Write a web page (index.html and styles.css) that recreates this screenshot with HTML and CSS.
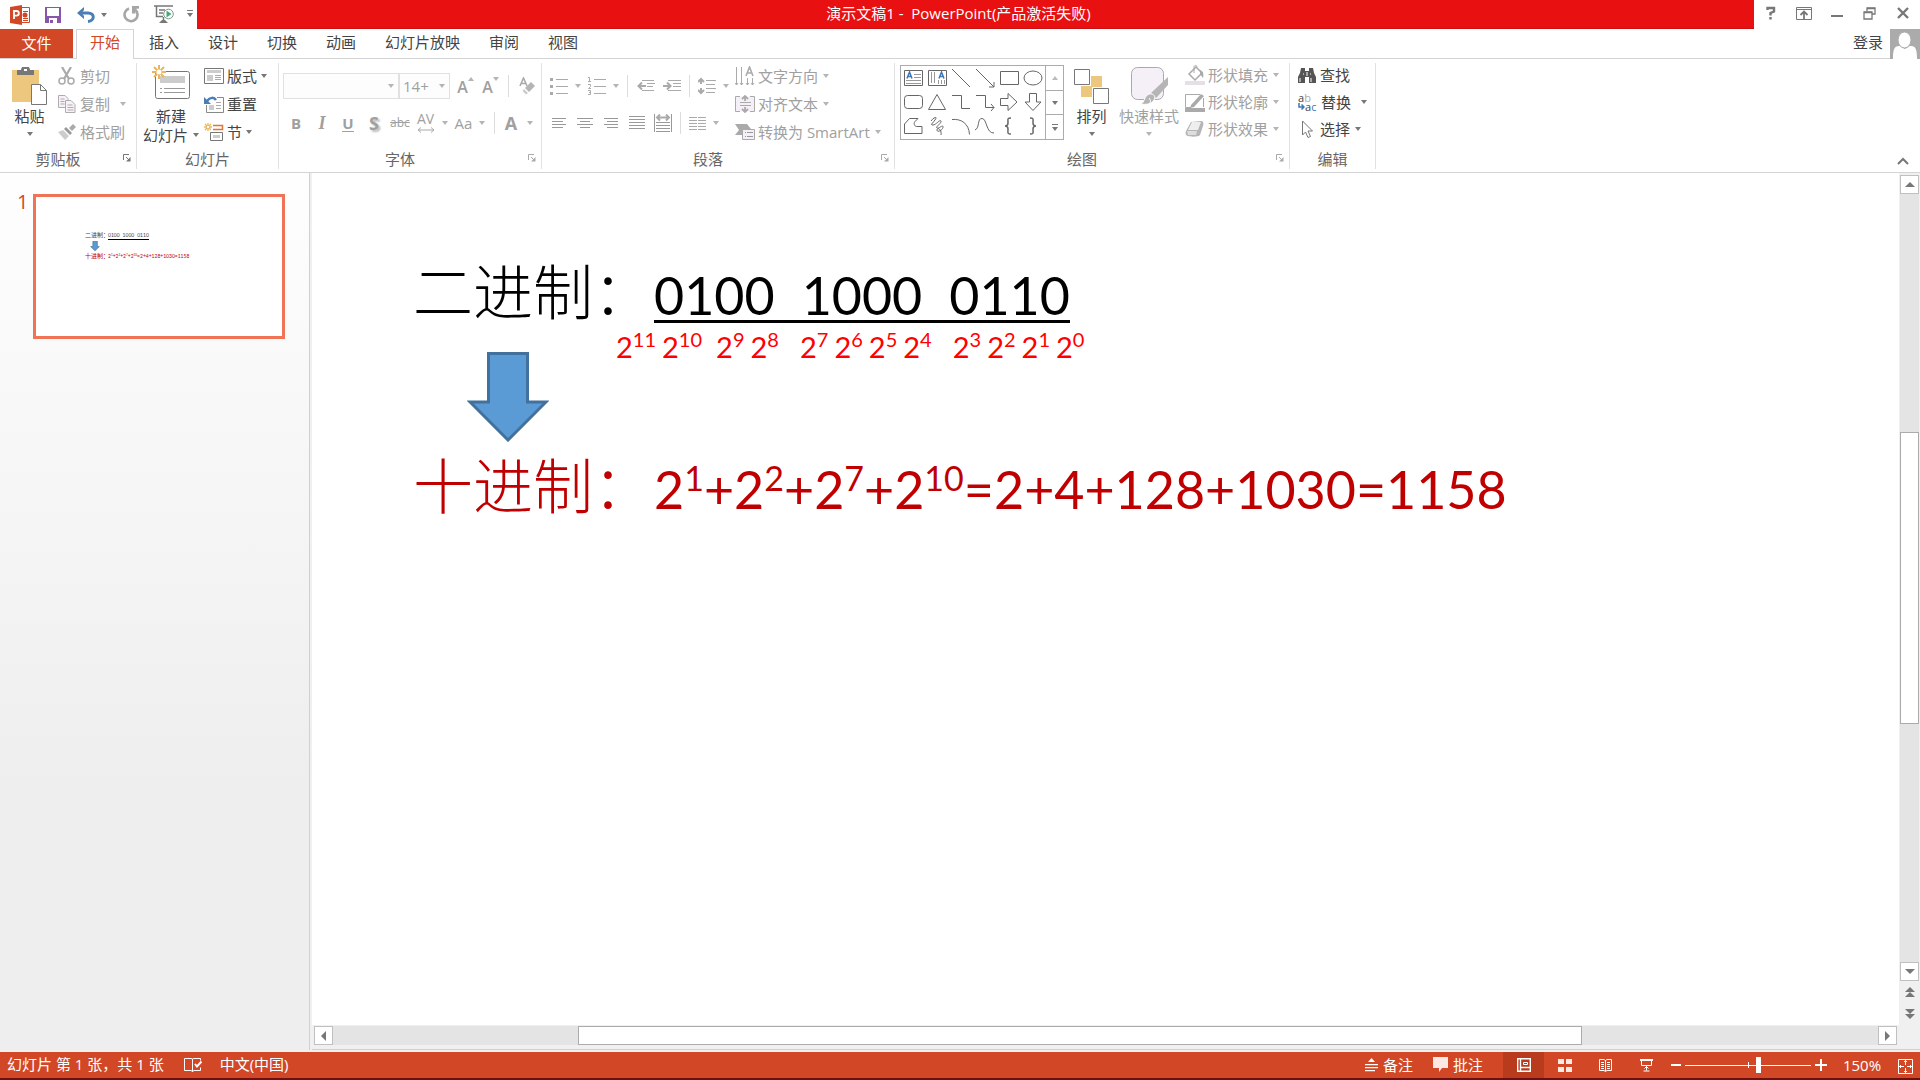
FILE: index.html
```html
<!DOCTYPE html>
<html lang="zh-CN">
  <head>
    <meta charset="UTF-8" />
    <meta name="viewport" content="width=device-width, initial-scale=1.0" />
    <title>演示文稿1 - PowerPoint</title>
    <link rel="stylesheet" href="styles.css">
  </head>
  <body>
    <!-- title bar -->
    <header class="titlebar">
      <div class="quick">
        <svg class="logo" width="20" height="20" viewBox="0 0 20 20"><path d="M11 2.500h8.500v15H11" fill="#fff" stroke="#d24726"/><path d="M13 6.500h5M13 13.500h5M13 15.500h5" stroke="#d24726"/><circle cx="15" cy="10" r="2.500" fill="#d24726"/><path d="M0 2 12 0v20L0 18z" fill="#d24726"/><path d="M4 14V6h2.500a2.300 2.300 0 0 1 0 4.700H4" fill="none" stroke="#fff" stroke-width="1.800"/></svg>
        <button class="save" aria-label="保存"><svg width="16" height="16" viewBox="0 0 16 16"><path d="M0 0h16v16H0z" fill="#8a56ac"/><path d="M2 1h12v8H2zM4 11h8v5H4z" fill="#fff"/><path d="M5 13h3v3H5z" fill="#8a56ac"/></svg></button>
        <button class="undo" aria-label="撤消"><svg width="18" height="16" viewBox="0 0 18 16"><path d="M2 6h9c7 0 7 8 0 8.500" fill="none" stroke="#4a7eb5" stroke-width="3"/><path d="M7 0v3L4.500 6 7 9v3L0 6z" fill="#4a7eb5"/></svg><i class="caret"></i></button>
        <button class="redo" aria-label="恢复"><svg width="17" height="17" viewBox="0 0 17 17"><path d="M6 2.500A6.500 6.500 0 1 0 12 3.500" fill="none" stroke="#a6a6a6" stroke-width="2.600"/><path d="M9 0h7v2.500l-3.500.5v4.500H9z" fill="#a6a6a6"/></svg></button>
        <button class="show" aria-label="从头开始"><svg width="20" height="19" viewBox="0 0 20 19"><path d="M0 1h19M2.500 1v10.500H9M5 5h6M5 8h4M9.500 12v3" fill="none" stroke="#777" stroke-width="1.500"/><path d="m5 18 3-3h3l3 3z" fill="#777"/><circle cx="14.500" cy="9" r="4.800" fill="#fff" stroke="#7a9c8a"/><path d="m12.500 5.500 5 3.500-5 3.500z" fill="#4ba779"/></svg></button>
        <button class="custom" aria-label="自定义快速访问工具栏"><i class="caret lined"></i></button>
      </div>
      <h1 class="caption">演示文稿1 -&nbsp; PowerPoint(产品激活失败)</h1>
      <div class="winbtns">
        <button aria-label="帮助"><svg width="10" height="14" viewBox="0 0 10 14"><path d="M1.500 4V2h6.500v3.500L4.500 7v2.500M4.500 11v2.500" fill="none" stroke="#777" stroke-width="2.400"/></svg></button>
        <button aria-label="功能区显示选项"><svg width="16" height="13" viewBox="0 0 16 13" fill="none" stroke="#777"><path d="M.5.5h15v12H.5zM0 2.500h16"/><path d="M8 12V5M4.500 8 8 4.500 11.500 8" stroke-width="1.800"/></svg></button>
        <button aria-label="最小化"><svg width="12" height="12" viewBox="0 0 12 12"><path d="M0 8h12v2H0z" fill="#777"/></svg></button>
        <button aria-label="还原"><svg width="13" height="13" viewBox="0 0 13 13" fill="none" stroke="#777" stroke-width="1.300"><path d="M4 4V1h8v6H9M1 5h8v7H1z"/><path d="M4 1.500h8M1 5.500h8"/></svg></button>
        <button aria-label="关闭"><svg width="12" height="12" viewBox="0 0 12 12"><path d="m1 1 10 10M11 1 1 11" stroke="#777" stroke-width="2.400"/></svg></button>
      </div>
    </header>

    <!-- ribbon tabs -->
    <nav class="tabs">
      <button class="tab file">文件</button>
      <button class="tab active">开始</button>
      <button class="tab">插入</button>
      <button class="tab">设计</button>
      <button class="tab">切换</button>
      <button class="tab">动画</button>
      <button class="tab">幻灯片放映</button>
      <button class="tab">审阅</button>
      <button class="tab">视图</button>
      <button class="login">登录</button>
      <svg class="avatar" width="30" height="30" viewBox="0 0 30 30"><path d="M0 0h30v30H0z" fill="#ababab"/><path d="M3 30c0-9 1-13 6-13h1l5 3 5-3h1c5 0 6 4 6 13z" fill="#fff"/><ellipse cx="14.500" cy="11" rx="6.500" ry="8" fill="#fff" stroke="#ababab"/></svg>
    </nav>

    <!-- ribbon -->
    <section class="ribbon">
      <div class="group clipboard">
        <div class="tools">
          <button class="big"><svg width="35" height="38" viewBox="0 0 35 38"><path d="M0 3h27v32H0z" fill="#eec77e"/><path d="M5 3h4a4 4 0 0 1 9 0h4v5H5z" fill="#777"/><path d="M12 2h3v2h-3z" fill="#fff"/><path d="M19.500 17.500h9l6 6v14h-15z" fill="#fff" stroke="#777"/><path d="M28.500 17.500v6h6" fill="none" stroke="#777"/></svg><span>粘贴</span><i class="caret"></i></button>
          <div class="stack off">
            <button class="row"><svg width="18" height="18" viewBox="0 0 18 18" fill="none" stroke="#aaa"><circle cx="4" cy="14" r="3" stroke-width="1.500"/><circle cx="13" cy="14" r="3" stroke-width="1.500"/><path d="M4 0 11 12M13 0 6 12" stroke-width="2.200"/></svg>剪切</button>
            <button class="row"><svg width="18" height="18" viewBox="0 0 18 18" fill="#f7f2f7" stroke="#b0abb0"><path d="M.5.5H7l3 3v9H.500z"/><path d="M2.500 4h4M2.500 6.500h4M2.500 9h4"/><path d="M7.500 5.500H13l4 4v8H7.500z"/><path d="M9.500 10h5M9.500 12.500h6M9.500 15h6"/></svg>复制<i class="caret far"></i></button>
            <button class="row"><svg width="18" height="16" viewBox="0 0 18 16"><path d="m11 4 4-4 3 3-4 4z" fill="#aaa"/><path d="m8 3 6 6-2 2-6-6z" fill="#999"/><path d="m5 6 6 6-4 4-7-8z" fill="#ccc"/></svg>格式刷</button>
          </div>
        </div>
        <div class="label">剪贴板<svg class="launch" width="8" height="8" viewBox="0 0 8 8"><path d="M.5 6V.5H6M3 3l3 3" fill="none" stroke="#777"/><path d="M7.500 3v4.500H3z" fill="#777"/></svg></div>
      </div>

      <div class="group slides">
        <div class="tools">
          <button class="big"><svg width="38" height="35" viewBox="0 0 38 35"><rect x="3.500" y="6.500" width="34" height="27" rx="2" fill="#fff" stroke="#777"/><path d="M8 11h25v7H8z" fill="#ccc"/><path d="M8 23.500h2M12 23.500h21M8 27.500h2M12 27.500h21" stroke="#999"/><path d="M7 0v14M0 7h14M2 2l10 10M12 2 2 12" stroke="#eab65c" stroke-width="2"/><circle cx="7" cy="7" r="2.500" fill="#fff"/></svg><span>新建</span><span>幻灯片<i class="caret"></i></span></button>
          <div class="stack">
            <button class="row"><svg width="20" height="16" viewBox="0 0 20 16"><path d="M.5.5h19v15H.5z" fill="#fff" stroke="#777"/><path d="M3 2h14v3H3zM3 7h6v6H3z" fill="#ccc"/><path d="M11 7.500h6M11 9.500h6M11 11.500h6" stroke="#aaa"/></svg>版式<i class="caret"></i></button>
            <button class="row"><svg width="20" height="17" viewBox="0 0 20 17"><path d="M13 1.500h6.500v15h-17V9" fill="#fff" stroke="#888"/><path d="M5 9h5v5H5z" fill="#ccc"/><path d="M12 6.500h5M12 9.500h5M12 12.500h5" stroke="#aaa"/><path d="M3 5c3-4 7-4 9-1" fill="none" stroke="#4a7eb5" stroke-width="2.500"/><path d="M0 1v7h7z" fill="#4a7eb5"/></svg>重置</button>
            <button class="row"><svg width="20" height="18" viewBox="0 0 20 18"><path d="M9 2.500h9.500v4H9" fill="none" stroke="#df7637" stroke-width="1.500"/><path d="M6.500 9.500h12v8h-12z" fill="#fff" stroke="#777"/><path d="M9 12h7v3H9z" fill="#ccc"/><path d="M4 0v8M0 4h8M1 1l6 6M7 1 1 7" stroke="#eab65c" stroke-width="1.300"/><circle cx="4" cy="4" r="1.200" fill="#fff"/></svg>节<i class="caret"></i></button>
          </div>
        </div>
        <div class="label">幻灯片</div>
      </div>

      <div class="group font off">
        <div class="lines">
          <div class="line">
            <label class="combo family"><select aria-label="字体"><option></option></select><i class="caret"></i></label>
            <label class="combo size"><select aria-label="字号"><option>14+</option></select><i class="caret"></i></label>
            <button class="tool grow" aria-label="增大字号">A<i class="caret up"></i></button>
            <button class="tool grow" aria-label="减小字号">A<i class="caret"></i></button>
            <span class="sep"></span>
            <button class="tool" aria-label="清除格式"><svg width="17" height="18" viewBox="0 0 17 18"><path d="M1 9 4.500 1 8 9M2 6.500h5" fill="none" stroke="#aaa" stroke-width="1.600"/><path d="m12 5 4 4-6 6-4-4z" fill="#b5b5b5"/><path d="m5 12 4 4-2 1.500L3.500 14z" fill="#ccc"/></svg></button>
          </div>
          <div class="line">
            <button class="tool"><b>B</b></button>
            <button class="tool italic"><b>I</b></button>
            <button class="tool under"><b>U</b></button>
            <button class="tool shadow"><b>S</b></button>
            <button class="tool strike">abc</button>
            <button class="tool wide spacing"><span>AV<svg width="18" height="6" viewBox="0 0 18 6"><path d="M1 3h16M4 .5 1 3l3 2.500M14 .5 17 3l-3 2.500" fill="none" stroke="#aaa"/></svg></span><i class="caret"></i></button>
            <button class="tool wide">Aa<i class="caret"></i></button>
            <span class="sep"></span>
            <button class="tool wide color"><b>A</b><i class="caret"></i></button>
          </div>
        </div>
        <div class="label">字体<svg class="launch" width="8" height="8" viewBox="0 0 8 8"><path d="M.5 6V.5H6M3 3l3 3" fill="none" stroke="#aaa"/><path d="M7.500 3v4.500H3z" fill="#aaa"/></svg></div>
      </div>

      <div class="group para off">
        <div class="tools">
          <div class="lines">
            <div class="line">
              <button class="tool wide" aria-label="项目符号"><svg width="18" height="18" viewBox="0 0 18 18"><path d="M6 2.500h12M6 9.500h12M6 16.500h12" stroke="#aaa"/><path d="M0 1h3v3H0zM0 8h3v3H0zM0 15h3v3H0z" fill="#aaa"/></svg><i class="caret"></i></button>
              <button class="tool wide" aria-label="编号"><svg width="18" height="18" viewBox="0 0 18 18" fill="none" stroke="#aaa"><path d="M6 2.500h12M6 9.500h12M6 16.500h12M0 .5h1.500v4M0 4.500h3M0 7.500h2.500v2L.5 11.500H3M0 13.500h2.500v4H0M1 15.500h1.500"/></svg><i class="caret"></i></button>
              <span class="sep"></span>
              <button class="tool" aria-label="减少缩进"><svg width="18" height="12" viewBox="0 0 18 12"><path d="M5 .5h12M10 3.500h8M10 6.500h6M5 10.500h12" stroke="#aaa"/><path d="M2 6h7M5 2.500 1.500 6 5 9.500" fill="none" stroke="#aaa" stroke-width="2"/></svg></button>
              <button class="tool" aria-label="增加缩进"><svg width="18" height="12" viewBox="0 0 18 12"><path d="M5 .5h13M10 3.500h8M10 6.500h8M5 10.500h13" stroke="#aaa"/><path d="M0 6h7M4 2.500 7.500 6 4 9.500" fill="none" stroke="#aaa" stroke-width="2"/></svg></button>
              <span class="sep slim"></span>
              <button class="tool wide" aria-label="行距"><svg width="18" height="18" viewBox="0 0 18 18"><path d="M8 3.500h10M8 7.500h9M8 11.500h10M8 15.500h9" stroke="#aaa"/><path d="M3 2v5M3 11v5M0 5l3-3 3 3M0 13l3 3 3-3" fill="none" stroke="#aaa" stroke-width="2"/></svg><i class="caret"></i></button>
            </div>
            <div class="line">
              <button class="tool" aria-label="左对齐"><svg width="14" height="13" viewBox="0 0 14 13"><path d="M0 1.500h14M0 4.500h11M0 7.500h14M0 10.500h11" stroke="#999"/></svg></button>
              <button class="tool" aria-label="居中"><svg width="16" height="13" viewBox="0 0 16 13"><path d="M0 1.500h16M3 4.500h10M0 7.500h16M3 10.500h10" stroke="#999"/></svg></button>
              <button class="tool" aria-label="右对齐"><svg width="14" height="13" viewBox="0 0 14 13"><path d="M0 1.500h14M3 4.500h11M0 7.500h14M3 10.500h11" stroke="#999"/></svg></button>
              <button class="tool" aria-label="两端对齐"><svg width="16" height="14" viewBox="0 0 16 14"><path d="M0 .5h16M0 3.500h16M0 6.500h16M0 9.500h16M0 12.500h16" stroke="#999"/></svg></button>
              <button class="tool" aria-label="分散对齐"><svg width="18" height="18" viewBox="0 0 18 18"><path d="M.5 0v18M17.500 0v18M2 8.500h14M2 11.500h14M2 14.500h14M2 17.500h14" stroke="#999"/><path d="M3 3.500h12M6 .5l-3 3 3 3M12 .5l3 3-3 3" fill="none" stroke="#aaa" stroke-width="2"/></svg></button>
              <span class="sep slim"></span>
              <button class="tool wide" aria-label="分栏"><svg width="17" height="13" viewBox="0 0 17 13"><path d="M0 .5h8M9 .5h8M0 3.500h8M9 3.500h8M0 6.500h8M9 6.500h8M0 9.500h8M9 9.500h8M0 12.500h8M9 12.500h8" stroke="#aaa"/></svg><i class="caret"></i></button>
            </div>
          </div>
          <div class="stack">
            <button class="row"><svg width="20" height="20" viewBox="0 0 20 20" fill="none" stroke="#aaa"><path d="M1.500 1v18M6.500 1v18M12.500 12v7M17.500 12v7M0 17l1.500 2L3 17M5 17l1.500 2L8 17M11 17l1.500 2 1.500-2M16 17l1.500 2 1.500-2"/><path d="M11 10 14.500 1 18 10M12 7h5" stroke-width="1.600"/></svg>文字方向<i class="caret"></i></button>
            <button class="row"><svg width="20" height="18" viewBox="0 0 20 18"><path d="M.5 1.500h19v15H.5z" fill="#f5f0f7"/><path d="M5 1.500H.5v15H5M15 1.500h4.500v15H15" fill="none" stroke="#aaa"/><path d="M5 7.500h11M5 10.500h11" stroke="#aaa"/><path d="M10 6V1M10 12v5M7 4l3-3 3 3M7 14l3 3 3-3" fill="none" stroke="#aaa" stroke-width="1.800"/></svg>对齐文本<i class="caret"></i></button>
            <button class="row"><svg width="20" height="16" viewBox="0 0 20 16"><path d="M0 0h12l4 5H8v6H0l4-5z" fill="#aaa"/><path d="M7.500 5.500h12v10h-12z" fill="#f5f0f7" stroke="#aaa"/><path d="M10 8.500h1M12 8.500h6M10 12.500h1M12 12.500h6" stroke="#999"/></svg>转换为 SmartArt<i class="caret"></i></button>
          </div>
        </div>
        <div class="label">段落<svg class="launch" width="8" height="8" viewBox="0 0 8 8"><path d="M.5 6V.5H6M3 3l3 3" fill="none" stroke="#aaa"/><path d="M7.500 3v4.500H3z" fill="#aaa"/></svg></div>
      </div>

      <div class="group draw">
        <div class="tools">
          <div class="gallery">
            <div class="shapes">
              <svg viewBox="0 0 24 24"><path d="M3.500 4.500h18v15h-18z"/><path d="M13 8.500h7M13 11.500h7M5 14.500h15M5 17.500h15" stroke="#999"/><path d="M6 12.500 8.500 6 11 12.500M7 10.500h3" stroke="#3f76b5" stroke-width="1.500"/></svg>
              <svg viewBox="0 0 24 24"><path d="M3.500 4.500h18v15h-18z"/><path d="M6.500 6v11M9.500 6v11M13.500 14v4M16.500 14v4M19.500 14v4" stroke="#999"/><path d="M14 12.500 16.500 6 19 12.500M15 10.500h3" stroke="#3f76b5" stroke-width="1.500"/></svg>
              <svg viewBox="0 0 24 24"><path d="m3 3 18 18"/></svg>
              <svg viewBox="0 0 24 24"><path d="m3 3 18 18M21 16v5h-5"/></svg>
              <svg viewBox="0 0 24 24"><path d="M3.500 5.500h18v13h-18z"/></svg>
              <svg viewBox="0 0 24 24"><ellipse cx="12" cy="12" rx="9" ry="7"/></svg>
              <svg viewBox="0 0 24 24"><rect x="3.500" y="5.500" width="18" height="13" rx="3"/></svg>
              <svg viewBox="0 0 24 24"><path d="m12 4.500 8.500 15h-17z"/></svg>
              <svg viewBox="0 0 24 24"><path d="M3 5.500h9.500v13H21"/></svg>
              <svg viewBox="0 0 24 24"><path d="M3 5.500h9.500v12H21M18 14l3 3.500-3 3.500"/></svg>
              <svg viewBox="0 0 24 24"><path d="M3.500 8.500H11v-5l9 8.500-9 8.500v-5H3.500z"/></svg>
              <svg viewBox="0 0 24 24"><path d="M8.500 3.500h7V12h4.500l-8 8.500L4 12h4.500z"/></svg>
              <svg viewBox="0 0 24 24"><path d="M3.500 19.500V10l5-5.500H17l-3 3c-2 3 0 5 2 5h5v7z"/></svg>
              <svg viewBox="0 0 24 24"><path d="M6 7C9 3 13 2 10 6S5 11 8 11s7-6 8-4-6 6-4 7 6-4 6-1-6 6-6 3 5-1 4 5"/></svg>
              <svg viewBox="0 0 24 24"><path d="M3 5.500c9-1 17 4 17.500 15"/></svg>
              <svg viewBox="0 0 24 24"><path d="M2 16C7 14 4 4 9 4.500c5 0 4 15 12 14.500"/></svg>
              <svg viewBox="0 0 24 24"><path d="M14 4c-4 0-3 1-3 5 0 2-1 3-3 3 2 0 3 1 3 3 0 4-1 5 3 5" stroke-width="1.500"/></svg>
              <svg viewBox="0 0 24 24"><path d="M9 4c4 0 3 1 3 5 0 2 1 3 3 3-2 0-3 1-3 3 0 4 1 5-3 5" stroke-width="1.500"/></svg>
            </div>
            <div class="pager">
              <button class="dim" aria-label="上一行"><i class="caret up"></i></button>
              <button aria-label="下一行"><i class="caret"></i></button>
              <button aria-label="其他"><i class="caret lined"></i></button>
            </div>
          </div>
          <button class="big"><svg width="35" height="38" viewBox="0 0 35 38"><path d="M17 9h11v11H17zM7 19h11v11H7z" fill="#eec77e"/><path d="M.5 2.500h15v15H.5zM19.500 21.500h15v15h-15z" fill="#fff" stroke="#777"/></svg><span>排列</span><i class="caret"></i></button>
          <button class="big off"><svg width="37" height="38" viewBox="0 0 37 38"><rect x=".5" y=".5" width="32" height="32" rx="6" fill="#f5f0f7" stroke="#aaa"/><path d="M37 10v8L25 31l-5-5z" fill="#b5b5b5"/><path d="M10 37c4-2 3-8 8-10 5-1 7 3 5 6-2 4-8 5-13 4z" fill="#b5b5b5" stroke="#fff"/><path d="M18 31c1 1 2 3 1 5" stroke="#fff" fill="none"/></svg><span>快速样式</span><i class="caret"></i></button>
          <div class="stack off">
            <button class="row"><svg width="20" height="20" viewBox="0 0 20 20"><path d="M4 9 11 2l6 6-7 7z" fill="#fff" stroke="#aaa" stroke-width="1.500"/><path d="M9 8V2c0-2 3-2 3 0" fill="none" stroke="#aaa"/><path d="M15 5c3 1 4 4 3 8l-3-4z" fill="#aaa"/><path d="M0 16h20v4H0z" fill="#e6e0e6"/></svg>形状填充<i class="caret"></i></button>
            <button class="row"><svg width="20" height="19" viewBox="0 0 20 19"><path d="M15 1.500H.5v13H6M18.500 5v9" fill="none" stroke="#aaa"/><path d="m6 12 10-11 3 2L9 14l-4 1z" fill="#aaa"/><path d="M0 15h20v4H0z" fill="#aaa"/></svg>形状轮廓<i class="caret"></i></button>
            <button class="row"><svg width="20" height="16" viewBox="0 0 20 16"><path d="m6 1 10-1c2 0 3 2 2 5l-3 9c-1 2-9 2-12 1-2 0-3-3-2-5z" fill="#b5b5b5"/><path d="M7 1h9l-3 8H3z" fill="#eee"/><path d="M2 10h10l-1 4H3z" fill="#ddd"/></svg>形状效果<i class="caret"></i></button>
          </div>
        </div>
        <div class="label">绘图<svg class="launch" width="8" height="8" viewBox="0 0 8 8"><path d="M.5 6V.5H6M3 3l3 3" fill="none" stroke="#aaa"/><path d="M7.500 3v4.500H3z" fill="#aaa"/></svg></div>
      </div>

      <div class="group edit">
        <div class="tools">
          <div class="stack">
            <button class="row"><svg width="18" height="16" viewBox="0 0 18 16"><path d="M3 1h4v3h4V1h4l1 5 2 4v6h-7v-6H7v6H0v-6l2-4z" fill="#555"/><path d="M2 11v4M5 7h1M12 7h1M13 11v4M9 5v4" stroke="#fff"/></svg>查找</button>
            <button class="row"><span class="abac"><span>a<em>b</em></span><span><svg width="7" height="8" viewBox="0 0 7 8"><path d="M1 0v4h5M3.500 1.500 6 4 3.500 6.500" fill="none" stroke="#3f76b5" stroke-width="1.500"/></svg>a<u>c</u></span></span>替换<i class="caret far"></i></button>
            <button class="row"><svg width="18" height="18" viewBox="0 0 18 18"><path d="M4.500 1v14l3-3 2.500 5.500 2.500-1L10 11h4.500z" fill="#fff" stroke="#777"/></svg>选择<i class="caret"></i></button>
          </div>
        </div>
        <div class="label">编辑</div>
      </div>

      <button class="collapse" aria-label="折叠功能区"><svg width="12" height="8" viewBox="0 0 12 8"><path d="m1 7 5-5 5 5" fill="none" stroke="#777" stroke-width="2"/></svg></button>
    </section>

    <!-- workspace -->
    <main class="work">
      <aside class="panel">
        <span class="num">1</span>
        <div class="thumb">
          <p class="t-row"><span>二进制：</span><span class="t-bin"><span>0100</span><span>1000</span><span>0110</span></span></p>
          <svg class="t-arrow" width="10" height="10" viewBox="0 0 82 90"><path d="M22 2h40v48h18L41 88 2 50h20z" fill="#5b9bd5" stroke="#41719c" stroke-width="6"/></svg>
          <p class="t-row red"><span>十进制：</span><span class="t-num">2<sup>1</sup>+2<sup>2</sup>+2<sup>7</sup>+2<sup>10</sup>=2+4+128+1030=1158</span></p>
        </div>
      </aside>

      <div class="stage">
        <div class="slide">
          <p class="obj binary"><span class="cn">二进制：</span><span class="bits"><span>0100</span><span>1000</span><span>0110</span></span></p>
          <p class="obj powers">
            <span class="nibble"><span>2<sup>11</sup></span><span>2<sup>10</sup></span></span>
            <span class="nibble near"><span>2<sup>9</sup></span><span>2<sup>8</sup></span></span>
            <span class="nibble"><span>2<sup>7</sup></span><span>2<sup>6</sup></span><span>2<sup>5</sup></span><span>2<sup>4</sup></span></span>
            <span class="nibble"><span>2<sup>3</sup></span><span>2<sup>2</sup></span><span>2<sup>1</sup></span><span>2<sup>0</sup></span></span>
          </p>
          <svg class="obj arrow" width="82" height="90" viewBox="0 0 82 90"><path d="M21.500 1.500h39v48.500H79L41 88 3 50h18.500z" fill="#5b9bd5" stroke="#41719c" stroke-width="3"/></svg>
          <p class="obj decimal"><span class="cn">十进制：</span><span>2<sup>1</sup>+2<sup>2</sup>+2<sup>7</sup>+2<sup>10</sup>=2+4+128+1030=1158</span></p>
        </div>
        <div class="vbar">
          <button class="sb" aria-label="向上"><i class="caret up"></i></button>
          <div class="vtrack"><div class="vthumb"></div></div>
          <button class="sb" aria-label="向下"><i class="caret"></i></button>
          <button class="jump" aria-label="上一张幻灯片"><i class="caret up"></i><i class="caret up"></i></button>
          <button class="jump" aria-label="下一张幻灯片"><i class="caret"></i><i class="caret"></i></button>
        </div>
        <div class="hbar">
          <button class="sb" aria-label="向左"><i class="caret to-left"></i></button>
          <div class="htrack"><div class="hthumb"></div></div>
          <button class="sb" aria-label="向右"><i class="caret to-right"></i></button>
        </div>
      </div>
    </main>

    <!-- status bar -->
    <footer class="status">
      <span class="count">幻灯片 第 1 张，共 1 张</span>
      <svg class="spell" width="18" height="16" viewBox="0 0 18 16" fill="none" stroke="#fff"><path d="M8.500 14.500V2L7 1.500H.5v12H7zM8.500 2l1.500-.500h6.500v2M8.500 14.500l1.500-1h6.500v-3"/><path d="m11 7 2 2.500 4.500-5" stroke-width="2"/></svg>
      <span>中文(中国)</span>
      <div class="views">
        <button class="st notes"><svg width="13" height="14" viewBox="0 0 13 14"><path d="m6.500 0 3.500 4H3zM0 6h13v1.300H0zM0 9h13v1.300H0zM0 12h10v1.300H0z" fill="#fff"/></svg>备注</button>
        <button class="st notes"><svg width="15" height="15" viewBox="0 0 15 15"><path d="M0 0h15v11H9l-3 4v-4H0z" fill="#fde9e4"/></svg>批注</button>
        <button class="view on" aria-label="普通视图"><svg width="14" height="14" viewBox="0 0 14 14" fill="none" stroke="#fff"><path d="M.7.700h12.600v12.600H.7zM3.500 1v12M4 9.500h9" stroke-width="1.400"/><path d="M6.500 4.500h4v2h-4z"/></svg></button>
        <button class="view" aria-label="幻灯片浏览"><svg width="14" height="13" viewBox="0 0 14 13"><path d="M0 0h6v5H0zM8 0h6v5H8zM0 8h6v5H0zM8 8h6v5H8z" fill="#fde9e4"/></svg></button>
        <button class="view" aria-label="阅读视图"><svg width="13" height="13" viewBox="0 0 13 13" fill="none" stroke="#fff"><path d="M6.500 12.500 5 11.500H.5V.5H5l1.500 1 1.500-1h4.500v11H8zM6.500 1v11M2 3.500h3M2 5.500h3M2 7.500h3M2 9.500h3M8 3.500h3M8 5.500h3M8 7.500h3M8 9.500h3"/></svg></button>
        <button class="view" aria-label="幻灯片放映"><svg width="13" height="13" viewBox="0 0 13 13" fill="none" stroke="#fff"><path d="M0 1h13" stroke-width="2"/><path d="M1.500 2v4.500h10V2M6.500 6.500v5M3.500 12h6M4.500 9.500l2-2 2 2"/></svg></button>
        <button class="zoom" aria-label="缩小"><svg width="10" height="12" viewBox="0 0 10 12"><path d="M0 5h10v2H0z" fill="#fff"/></svg></button>
        <input class="slider" type="range" min="0" max="100" value="59" aria-label="缩放">
        <button class="zoom" aria-label="放大"><svg width="12" height="12" viewBox="0 0 12 12"><path d="M0 5h12v2H0zM5 0h2v12H5z" fill="#fff"/></svg></button>
        <button class="pct">150%</button>
        <button class="fit" aria-label="适应窗口"><svg width="15" height="15" viewBox="0 0 15 15" fill="none" stroke="#fff"><path d="M.5.5h14v14H.5zM7.500 1v5M7.500 9v5M1 7.500h5M9 7.500h5M6 3l1.500-1.500L9 3M6 12l1.500 1.500L9 12M3 6 1.500 7.500 3 9M12 6l1.500 1.500L12 9"/></svg></button>
      </div>
    </footer>
  </body>
</html>
```
FILE: styles.css
```css
* {
  box-sizing: border-box;
}
body {
  margin: 0;
  height: 100vh;
  display: flex;
  flex-direction: column;
  overflow: hidden;
  background: #fff;
  color: #444;
  font-family: "Open Sans", "Noto Sans CJK SC", sans-serif;
  font-size: 15px;
  line-height: 20px;
}
button {
  border: 0;
  padding: 0;
  background: none;
  color: inherit;
  font: inherit;
  white-space: nowrap;
  display: flex;
  align-items: center;
  justify-content: center;
}
p {
  margin: 0;
}
svg {
  flex: none;
}
.off {
  color: #a0a0a0;
}

/* small drop-down triangle */
.caret {
  flex: none;
  width: 0;
  height: 0;
  border: 3px solid transparent;
  border-top: 4px solid #777;
  border-bottom: 0;
}
.caret.up {
  border-top: 0;
  border-bottom: 4px solid #777;
}
.caret.lined {
  position: relative;
}
.caret.lined::before {
  content: "";
  position: absolute;
  left: -3px;
  top: -7px;
  width: 6px;
  height: 1px;
  background: #777;
}
.off .caret {
  border-top-color: #b5b5b5;
}
.off .caret.up {
  border-bottom-color: #b5b5b5;
}

/* title bar */
.titlebar {
  display: flex;
  height: 29px;
  background: #fff;
}
.quick {
  width: 197px;
  padding-left: 10px;
  display: flex;
  align-items: center;
}
.quick .save {
  margin-left: 15px;
}
.quick .undo {
  margin-left: 16px;
  gap: 6px;
}
.quick .redo {
  margin-left: 16px;
}
.quick .show {
  margin-left: 14px;
}
.quick .custom {
  margin-left: 13px;
}
.caption {
  flex: 1;
  margin: 0;
  padding-right: 34px;
  background: #e81010;
  border-bottom: 1px solid #c81010;
  color: #fff;
  font-size: 15px;
  font-weight: 400;
  line-height: 26px;
  text-align: center;
}
.winbtns {
  width: 166px;
  display: flex;
  padding: 0 1px 0 0;
}
.winbtns button {
  width: 33px;
  height: 26px;
}

/* tabs */
.tabs {
  display: flex;
  height: 30px;
  gap: 1px;
  border-bottom: 1px solid #d4d4d4;
}
.tab {
  padding: 0 14px 4px;
}
.tab.file {
  width: 73px;
  margin-right: 2px;
  background: #d24726;
  color: #fff;
  padding-bottom: 1px;
}
.tab.active {
  height: 30px;
  padding: 0 13px 5px;
  border: 1px solid #d4d4d4;
  border-bottom: 0;
  background: #fff;
  color: #d24726;
}
.login {
  margin-left: auto;
  padding: 0 6px 4px 0;
}

/* ribbon */
.ribbon {
  display: flex;
  height: 114px;
  padding-top: 4px;
  border-bottom: 1px solid #d4d4d4;
}
.group {
  height: 106px;
  display: flex;
  flex-direction: column;
  border-right: 1px solid #e1e1e1;
}
.clipboard {
  width: 137px;
}
.slides {
  width: 142px;
}
.font {
  width: 263px;
}
.para {
  width: 353px;
}
.draw {
  width: 395px;
}
.edit {
  width: 86px;
}
.tools {
  display: flex;
  flex: 1;
}
.label {
  position: relative;
  height: 18px;
  padding-right: 20px;
  text-align: center;
  line-height: 16px;
  color: #666;
}
.slides .label,
.edit .label {
  padding-right: 0;
}
.launch {
  position: absolute;
  right: 5px;
  top: 3px;
}
.big {
  flex-direction: column;
  justify-content: flex-start;
  padding-top: 4px;
}
.big > svg {
  margin-bottom: 1px;
}
.big > .caret {
  margin-top: 6px;
}
.big span {
  display: flex;
  align-items: center;
  gap: 5px;
}
.clipboard .big {
  margin-left: 12px;
}
.slides .big {
  margin-left: 6px;
  padding-top: 2px;
}
.slides .big > svg {
  margin-bottom: 6px;
}
.slides .big span + span {
  line-height: 18px;
}
.stack {
  display: flex;
  flex-direction: column;
  gap: 8px;
  padding-top: 3px;
}
.row {
  justify-content: flex-start;
  height: 20px;
  gap: 4px;
}
.row .caret {
  margin-left: 1px;
}
.row .caret.far {
  margin-left: 6px;
}
.clipboard .stack {
  margin-left: 11px;
}
.slides .stack {
  margin-left: 5px;
}
.slides .row {
  gap: 3px;
}

/* font and paragraph tools */
.lines {
  flex: 1;
  padding: 10px 0 0 4px;
}
.line {
  display: flex;
  align-items: center;
  height: 26px;
  margin-bottom: 11px;
}
.combo {
  position: relative;
  height: 26px;
}
.combo select {
  width: 100%;
  height: 26px;
  appearance: none;
  border: 1px solid #e1e1e1;
  border-radius: 0;
  background: #fdfdfd;
  padding: 0 3px;
  color: #a0a0a0;
  font: inherit;
}
.combo .caret {
  position: absolute;
  right: 5px;
  top: 11px;
}
.family {
  width: 116px;
}
.size {
  width: 51px;
  margin-right: 3px;
}
.tool {
  width: 26px;
  height: 24px;
}
.tool.wide {
  width: 38px;
  gap: 7px;
}
.tool.grow {
  width: 25px;
  align-items: flex-start;
  font-size: 16px;
  font-weight: 600;
  line-height: 26px;
}
.grow .caret {
  margin-top: 3px;
}
.sep {
  width: 1px;
  height: 22px;
  margin: 0 5px;
  background: #ddd;
}
.sep.slim {
  margin: 0 4px;
}
.italic {
  font-family: "Liberation Serif", serif;
  font-style: italic;
  font-size: 18px;
}
.under b {
  border-bottom: 1px solid #a0a0a0;
  line-height: 16px;
}
.shadow {
  font-size: 18px;
  text-shadow: 2px 2px 2px #bbb;
}
.strike {
  font-size: 12px;
  text-decoration: line-through;
}
.spacing span {
  display: flex;
  flex-direction: column;
  align-items: center;
  font-size: 14px;
  line-height: 12px;
  gap: 2px;
}
.color {
  font-size: 18px;
}
.tool.color {
  gap: 10px;
}
.para .lines {
  flex: none;
  width: 193px;
}
.para .stack {
  gap: 8px;
  padding-top: 3px;
}
.para .row,
.draw .row {
  gap: 3px;
}
.para .row .caret,
.draw .row .caret {
  margin-left: 2px;
}

/* drawing */
.gallery {
  display: flex;
  width: 164px;
  height: 75px;
  margin: 2px 0 0 5px;
  border: 1px solid #ababab;
}
.shapes {
  flex: 1;
  display: grid;
  grid-template-columns: repeat(6, 24px);
  grid-auto-rows: 24px;
}
.shapes svg {
  fill: none;
  stroke: #666;
}
.pager {
  width: 18px;
  display: flex;
  flex-direction: column;
  border-left: 1px solid #ababab;
}
.pager button {
  flex: 1;
}
.pager button + button {
  border-top: 1px solid #ababab;
}
.pager .dim .caret {
  border-bottom-color: #bbb;
}
.pager .caret.lined {
  margin-top: 4px;
}
.gallery + .big {
  margin-left: 10px;
}
.big + .big {
  margin-left: 10px;
}
.draw .stack,
.edit .stack {
  gap: 7px;
  padding-top: 2px;
}
.draw .stack {
  margin-left: 6px;
}
.edit .stack {
  padding-left: 8px;
}
.abac {
  width: 19px;
  font-size: 11px;
  line-height: 9px;
}
.abac span {
  display: flex;
  align-items: center;
}
.abac em {
  font-style: normal;
  color: #aaa;
}
.abac u {
  text-decoration: none;
  color: #3f76b5;
}
.collapse {
  margin: auto 11px 7px auto;
}

/* workspace */
.work {
  flex: 1;
  min-height: 0;
  display: flex;
  background: #f0f0f0;
}
.panel {
  width: 310px;
  margin-bottom: 2px;
  display: flex;
  align-items: flex-start;
  padding: 21px 24px 0 17px;
  border-right: 1px solid #d0d0d0;
  background: linear-gradient(#fefefe, #eeeeee 70%);
}
.num {
  width: 16px;
  font-size: 20px;
  line-height: 16px;
  color: #d24726;
}
.thumb {
  flex: 1;
  height: 145px;
  padding: 34px 0 0 49px;
  border: 3px solid #f07355;
  background: #fff;
  font-family: Lato, "Noto Sans CJK SC", sans-serif;
  font-size: 5px;
  line-height: 8px;
  white-space: nowrap;
}
.t-row {
  display: flex;
  height: 9px;
  color: #444;
}
.t-row > span:first-child {
  width: 23px;
  font-size: 6px;
}
.t-bin {
  display: flex;
  gap: 3px;
  border-bottom: 1px solid #000;
}
.t-arrow {
  display: block;
  margin: 1px 0 1px 5px;
}
.t-row.red {
  color: #c00000;
}
.t-num sup {
  font-size: 3px;
  line-height: 0;
}
.stage {
  flex: 1;
  min-width: 0;
  display: grid;
  grid-template-columns: 1fr 21px;
  grid-template-rows: 1fr 24px;
  margin: 0 0 2px 2px;
  border-bottom: 1px solid #d0d0d0;
}
.slide {
  position: relative;
  background: #fff;
  font-family: Lato, "Noto Sans CJK SC", sans-serif;
  font-size: 52px;
  line-height: 60px;
  white-space: nowrap;
}
.obj {
  position: absolute;
}
.binary,
.decimal {
  left: 101px;
  display: flex;
  align-items: baseline;
}
.binary {
  top: 89px;
  color: #000;
}
.decimal {
  top: 283px;
  color: #c00000;
}
.cn {
  width: 241px;
  font-size: 60px;
  font-weight: 300;
}
.bits {
  display: flex;
  gap: 27px;
  height: 58px;
  border-bottom: 3px solid #000;
}
.powers {
  left: 304px;
  top: 156px;
  display: flex;
  gap: 21px;
  color: #ff0000;
  font-size: 29px;
  line-height: 36px;
}
.nibble {
  display: flex;
  gap: 6px;
}
.nibble.near {
  margin-left: -7px;
}
.arrow {
  left: 155px;
  top: 179px;
}
sup {
  font-size: 34px;
  line-height: 0;
  vertical-align: 18px;
}
.powers sup {
  font-size: 20px;
  vertical-align: 11px;
}
.thumb sup {
  vertical-align: 2px;
}

/* scroll bars */
.vbar {
  display: flex;
  flex-direction: column;
  align-items: center;
  padding-top: 2px;
}
.sb {
  width: 19px;
  height: 19px;
  border: 1px solid #c0c0c0;
  background: #fff;
}
.sb .caret,
.jump .caret {
  border-width: 5px 5px 0;
}
.sb .caret.up,
.jump .caret.up {
  border-width: 0 5px 5px;
}
.sb .caret.to-left {
  border: 5px solid transparent;
  border-left: 0;
  border-right-color: #777;
}
.sb .caret.to-right {
  border: 5px solid transparent;
  border-right: 0;
  border-left-color: #777;
}
.vtrack {
  flex: 1;
  width: 19px;
  background: #e4e4e4;
  display: flex;
  flex-direction: column;
}
.vthumb {
  height: 38%;
  margin-top: 238px;
  border: 1px solid #ababab;
  background: #fff;
}
.jump {
  height: 22px;
  flex-direction: column;
}
.hbar {
  display: flex;
  padding: 1px 2px 4px;
}
.htrack {
  flex: 1;
  background: #e4e4e4;
  display: flex;
}
.hthumb {
  width: 65%;
  margin-left: 245px;
  border: 1px solid #ababab;
  background: #fff;
}

/* status bar */
.status {
  display: flex;
  align-items: center;
  height: 28px;
  padding-left: 7px;
  background: #d24726;
  border-bottom: 2px solid #6b0f10;
  color: #fff;
  line-height: 18px;
}
.status > span {
  padding-bottom: 2px;
}
.spell {
  margin: 0 18px 0 20px;
}
.views {
  margin-left: auto;
  height: 26px;
  display: flex;
  align-items: center;
}
.st {
  gap: 5px;
  margin-right: 20px;
  padding-bottom: 1px;
}
.view {
  width: 41px;
  height: 26px;
}
.view.on {
  background: #b83b1d;
}
.zoom {
  width: 17px;
  height: 26px;
}
.slider {
  appearance: none;
  width: 126px;
  height: 16px;
  margin: 0 1px;
  background:
    linear-gradient(#fff, #fff) 50% 50% / 1px 6px no-repeat,
    linear-gradient(#fff, #fff) 0 50% / 100% 1px no-repeat;
}
.slider::-webkit-slider-thumb {
  appearance: none;
  width: 5px;
  height: 16px;
  background: #fff;
}
.pct {
  width: 56px;
  margin-left: 5px;
  padding-bottom: 1px;
}
.fit {
  margin: 2px 7px 0 8px;
}
```
